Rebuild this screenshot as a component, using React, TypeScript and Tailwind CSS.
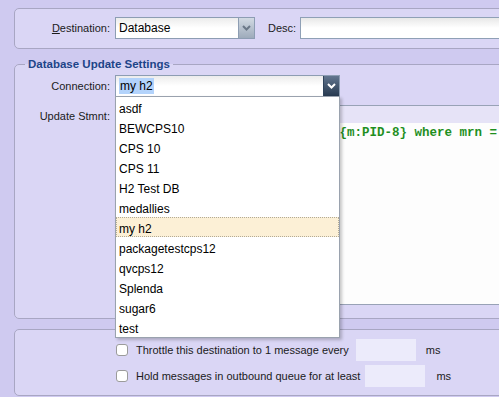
import React from "react";

const connections = [
  "asdf",
  "BEWCPS10",
  "CPS 10",
  "CPS 11",
  "H2 Test DB",
  "medallies",
  "my h2",
  "packagetestcps12",
  "qvcps12",
  "Splenda",
  "sugar6",
  "test",
];

function Chevron({ light }: { light?: boolean }) {
  return (
    <svg width="9" height="6" viewBox="0 0 9 6">
      <path
        d="M1 1 L4.5 4.5 L8 1"
        fill="none"
        stroke={light ? "#ffffff" : "#6b7888"}
        strokeWidth="2"
      />
    </svg>
  );
}

function SelectBox({ dark, children }: { dark?: boolean; children: React.ReactNode }) {
  return (
    <div className="flex h-[22px] w-full border border-[#8d9db3] bg-white">
      <div className="flex flex-1 items-center bg-gradient-to-b from-[#ececec] via-white to-white pl-[3px] text-[12px] text-black">
        {children}
      </div>
      {dark ? (
        <div className="flex w-[16px] items-center justify-center border-l border-[#30445c] bg-gradient-to-b from-[#62768f] to-[#283a50]">
          <Chevron light />
        </div>
      ) : (
        <div className="flex w-[16px] items-center justify-center border-l border-[#8d9db3] bg-gradient-to-b from-[#d2dae3] to-[#9eabbb]">
          <Chevron />
        </div>
      )}
    </div>
  );
}

export default function App() {
  return (
    <div className="h-[397px] w-[499px] overflow-hidden bg-[#cfcaf0] font-['Liberation_Sans',Arial,sans-serif] text-[11px] text-[#1b1b1b]">
      <div className="w-[760px] pl-[14px] pt-[8px]">
        {/* destination */}
        <div className="flex items-center rounded-[5px] border border-[#a8a6c3] bg-[#dad6f5] pb-[9px] pt-[8px]">
          <div className="w-[95px] text-right">
            <span className="underline">D</span>estination:
          </div>
          <div className="ml-[5px] w-[140px]">
            <SelectBox>Database</SelectBox>
          </div>
          <div className="ml-[13px]">Desc:</div>
          <div className="ml-[4px] h-[22px] w-[420px] border border-[#8fa0b6] bg-gradient-to-b from-[#e8e8e8] via-white to-white" />
        </div>

        {/* database settings */}
        <fieldset className="mt-[8px] rounded-[5px] border border-[#a8a6c3] bg-[#dad6f5] pb-[13px] pt-[4px]">
          <legend className="ml-[10px] px-[3px] text-[11.5px] font-bold leading-[14px] text-[#1d4488]">
            Database Update Settings
          </legend>
          <div className="flex items-center">
            <div className="w-[95px] text-right">Connection:</div>
            <div className="relative ml-[5px] w-[225px]">
              <SelectBox dark>
                <span className="inline-block bg-[#b3d3fb] px-[1px] leading-[16px]">my h2</span>
              </SelectBox>
              <div className="absolute left-0 top-[21px] z-10 w-[225px] border border-[#9aa2ae] bg-white shadow-[2px_2px_3px_rgba(0,0,0,0.22)]">
                {connections.map((c) => (
                  <div
                    key={c}
                    className={
                      c === "my h2"
                        ? "h-[20px] bg-[#fcf0d6] pl-[3px] pt-[2px] text-[12px] leading-[20px] text-black outline-1 -outline-offset-1 outline-dotted outline-[#b3ab96]"
                        : "h-[20px] pl-[3px] pt-[2px] text-[12px] leading-[20px] text-black"
                    }
                  >
                    {c}
                  </div>
                ))}
              </div>
            </div>
          </div>
          <div className="mt-[8px] flex items-start">
            <div className="w-[95px] pt-[4px] text-right leading-[14px]">Update Stmnt:</div>
            <div className="ml-[5px] h-[200px] flex-1 border border-[#98a2b6] bg-[#fdfdfd]">
              <div className="h-[17px] bg-[#e6e3f7]" />
              <div className="whitespace-pre pl-[6px] pt-[1px] font-['Liberation_Mono','Courier_New',monospace] text-[12.5px] font-bold leading-[18px] text-[#1f8f1f]">
                {"update patients set patid = ${m:PID-8} where mrn = '${m:PID-3}'"}
              </div>
            </div>
          </div>
        </fieldset>

        {/* queue options */}
        <div className="mt-[10px] rounded-[5px] border border-[#a8a6c3] bg-[#dad6f5] pb-[8px] pt-[9px]">
          <div className="flex h-[22px] items-center">
            <div className="w-[101px]" />
            <div className="h-[12px] w-[12px] rounded-[3px] border border-[#9b9b9b] bg-white" />
            <div className="ml-[8px]">Throttle this destination to 1 message every</div>
            <div className="ml-[7px] h-[22px] w-[60px] bg-[#ecebfb]" />
            <div className="ml-[10px]">ms</div>
          </div>
          <div className="mt-[4px] flex h-[22px] items-center">
            <div className="w-[101px]" />
            <div className="h-[12px] w-[12px] rounded-[3px] border border-[#9b9b9b] bg-white" />
            <div className="ml-[8px]">Hold messages in outbound queue for at least</div>
            <div className="ml-[5px] h-[22px] w-[60px] bg-[#ecebfb]" />
            <div className="ml-[11px]">ms</div>
          </div>
        </div>
      </div>
    </div>
  );
}
